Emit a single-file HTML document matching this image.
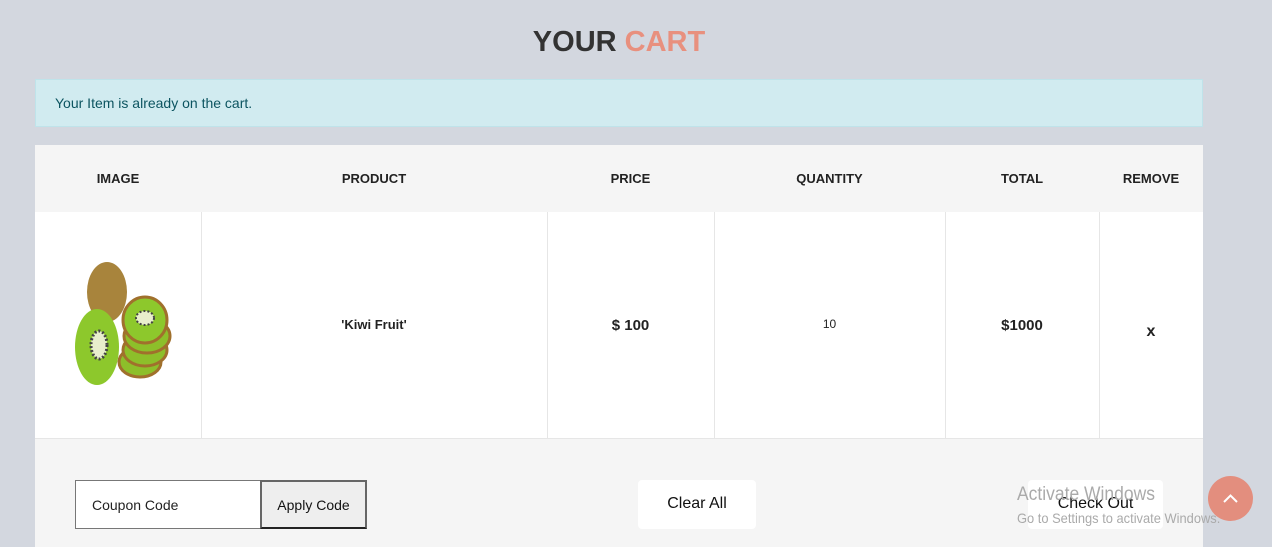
<!DOCTYPE html>
<html><head><style>
*{margin:0;padding:0;box-sizing:border-box}
body{width:1272px;height:547px;background:#d3d7df;font-family:"Liberation Sans",sans-serif;position:relative;overflow:hidden}
.abs{position:absolute}
h1{position:absolute;top:26px;left:0;width:1238px;text-align:center;font-size:29px;font-weight:bold;color:#333;letter-spacing:0px}
h1 span{color:#e8907e}
.alert{left:35px;top:79px;width:1168px;height:48px;background:#d1ebf0;border:1px solid #bfe3ea;color:#0c5460;font-size:14px;padding:15px 19px}
.tbl{left:35px;top:145px;width:1168px;height:402px;background:#fff}
.hd{left:0;top:0;width:1168px;height:67px;background:#f5f5f5}
.th{position:absolute;top:26px;font-size:13px;font-weight:bold;color:#222;text-align:center}
.v{position:absolute;top:67px;width:1px;height:226px;background:#e6e6e6}
.td{position:absolute;top:172px;font-size:14px;font-weight:bold;color:#222;text-align:center}
.ft{left:0;top:293px;width:1168px;height:109px;background:#f5f5f5;border-top:1px solid #e6e6e6}
.btn{position:absolute;background:#fff;border-radius:4px;font-size:16px;color:#111;text-align:center}
</style></head><body>
<h1>YOUR <span>CART</span></h1>
<div class="abs alert">Your Item is already on the cart.</div>
<div class="abs tbl">
 <div class="abs hd"></div>
 <div class="th" style="left:0;width:166px">IMAGE</div>
 <div class="th" style="left:166px;width:346px">PRODUCT</div>
 <div class="th" style="left:512px;width:167px">PRICE</div>
 <div class="th" style="left:679px;width:231px">QUANTITY</div>
 <div class="th" style="left:910px;width:154px">TOTAL</div>
 <div class="th" style="left:1064px;width:104px">REMOVE</div>
 <div class="v" style="left:166px"></div><div class="v" style="left:512px"></div><div class="v" style="left:679px"></div><div class="v" style="left:910px"></div><div class="v" style="left:1064px"></div>
 <svg class="abs" style="left:0;top:67px" width="166" height="226">
  <ellipse cx="72" cy="80" rx="20" ry="30" fill="#a8843c"/>
  <ellipse cx="105" cy="150" rx="21" ry="15" fill="#8dbf2a" stroke="#a0702c" stroke-width="3"/>
  <ellipse cx="110" cy="138" rx="22" ry="16" fill="#8dbf2a" stroke="#a0702c" stroke-width="3"/>
  <ellipse cx="112" cy="124" rx="23" ry="17" fill="#8dbf2a" stroke="#a0702c" stroke-width="3"/>
  <ellipse cx="110" cy="108" rx="22" ry="23" fill="#8dc82c" stroke="#a0702c" stroke-width="3"/>
  <ellipse cx="110" cy="106" rx="9" ry="7" fill="#e8eecc" stroke="#444" stroke-width="2" stroke-dasharray="2 2"/>
  <ellipse cx="62" cy="135" rx="22" ry="38" fill="#8dc82c"/>
  <ellipse cx="64" cy="133" rx="8" ry="14" fill="#e8eecc" stroke="#444" stroke-width="3" stroke-dasharray="2 2"/>
 </svg>
 <div class="td" style="left:166px;width:346px;font-size:13px">'Kiwi Fruit'</div>
 <div class="td" style="left:512px;width:167px;font-size:15px">$ 100</div>
 <div class="td" style="left:679px;width:231px;font-weight:normal;font-size:12px">10</div>
 <div class="td" style="left:910px;width:154px;font-size:15px">$1000</div>
 <div class="td" style="left:1064px;width:104px;top:178px;font-size:16px">x</div>
 <div class="abs ft">
  <div class="abs" style="left:40px;top:41px;width:186px;height:49px;background:#fff;border:1px solid #777;font-size:14px;padding:16px;color:#222">Coupon Code</div>
  <div class="abs" style="left:225px;top:41px;width:107px;height:49px;background:#eee;border:2px solid #666;border-bottom-color:#222;font-size:14px;padding:15px 0;text-align:center;color:#111">Apply Code</div>
  <div class="btn" style="left:603px;top:41px;width:118px;height:49px;padding:15px 0">Clear All</div>
  <div class="btn" style="left:993px;top:41px;width:135px;height:49px;padding:15px 0">Check Out</div>
 </div>
</div>
<div class="abs" style="left:1017px;top:484px;font-size:19px;color:#aaa;transform:scaleX(0.92);transform-origin:left">Activate Windows</div>
<div class="abs" style="left:1017px;top:510px;font-size:14px;color:#aaa;transform:scaleX(0.92);transform-origin:left">Go to Settings to activate Windows.</div>
<div class="abs" style="left:1208px;top:476px;width:45px;height:45px;border-radius:50%;background:#e38e7e"><svg width="45" height="45"><path d="M16 26 L22.5 19.5 L29 26" fill="none" stroke="#fff" stroke-width="2"/></svg></div>
</body></html>
